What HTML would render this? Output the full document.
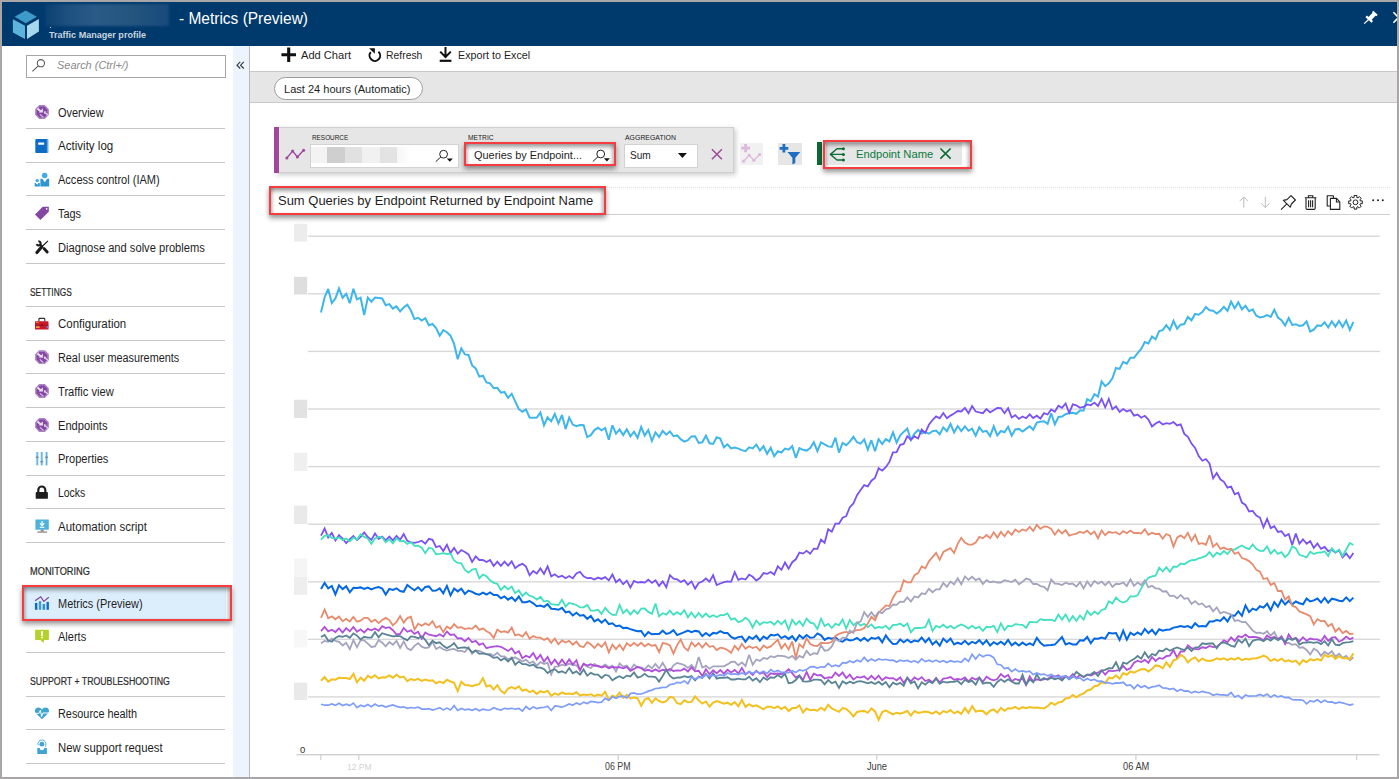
<!DOCTYPE html>
<html lang="en">
<head>
<meta charset="utf-8">
<title>Metrics (Preview)</title>
<style>
html,body{margin:0;padding:0;}
body{width:1399px;height:779px;overflow:hidden;background:#fff;font-family:"Liberation Sans",sans-serif;position:relative;}
.abs{position:absolute;}
.t{position:absolute;white-space:nowrap;line-height:1;transform:translateY(-50%);transform-origin:0 50%;}
#frame{position:absolute;left:0;top:0;width:1395px;height:775px;border-style:solid;border-color:#a8a6a6;border-width:2px;z-index:50;pointer-events:none;}
#hdr{left:2px;top:2px;width:1395px;height:44px;background:#003a6c;}
#blur{left:45px;top:4px;width:124px;height:22px;background:linear-gradient(90deg,#0a4073 0%,#1d507f 18%,#2a5a87 40%,#24557f 70%,#174a7b 100%);filter:blur(1.2px);}
#gutter{left:233px;top:46px;width:15.5px;height:731px;background:#edf4fd;}
#gline{left:248.5px;top:46px;width:1.6px;height:731px;background:#b9b9b9;}
.sep{position:absolute;left:26px;width:199px;height:1.3px;background:#c6c6c6;}
#search{left:26px;top:55px;width:197.5px;height:20.5px;border:1px solid #a6a6a6;background:#fff;box-sizing:content-box;}
#sel{left:24px;top:587px;width:201.5px;height:32.5px;background:#dceefb;}
.red{position:absolute;border:2.9px solid #f53c40;box-shadow:0 3px 5px rgba(0,0,0,.42),inset 0 4px 4px -1px rgba(0,0,0,.38),inset 3px 0 3px -1px rgba(0,0,0,.15),inset -4px 0 3px -1px rgba(0,0,0,.15);box-sizing:border-box;}
#graybar{left:250px;top:71px;width:1147px;height:32.4px;background:#e6e6e6;border-top:1px solid #c9c9c9;border-bottom:1px solid #c9c9c9;box-sizing:border-box;}
#pill{left:273.6px;top:76.5px;width:149px;height:23.4px;border:1px solid #9c9c9c;border-radius:12px;background:#fff;box-sizing:border-box;}
#mbar{left:273.6px;top:126.8px;width:460.2px;height:46px;background:#e6e6e6;border:1px solid #cfcfcf;box-sizing:border-box;box-shadow:2px 2px 5px rgba(0,0,0,.2);}
#mstrip{left:273.6px;top:127.2px;width:5.2px;height:45.6px;background:#a0479c;}
.inp{position:absolute;background:#fff;top:144.2px;height:23.6px;border:1px solid #d2d2d2;box-sizing:border-box;}
#dots{left:270px;top:187px;width:1120px;height:0;border-top:1px dotted #e2e2e2;}
#tline{left:270px;top:213.8px;width:1120px;height:1.3px;background:#cfcfcf;}
</style>
</head>
<body>
<div class="abs" id="hdr"></div>
<div class="abs" id="blur"></div>
<div class="abs" id="gutter"></div>
<div class="abs" id="gline"></div>
<div class="abs" id="search"></div>
<div class="abs" id="sel"></div>
<div class="sep" style="top:127.8px"></div>
<div class="sep" style="top:161.7px"></div>
<div class="sep" style="top:195px"></div>
<div class="sep" style="top:228.9px"></div>
<div class="sep" style="top:262.8px"></div>
<div class="sep" style="top:306px"></div>
<div class="sep" style="top:339.9px"></div>
<div class="sep" style="top:372.8px"></div>
<div class="sep" style="top:406.7px"></div>
<div class="sep" style="top:440.7px"></div>
<div class="sep" style="top:474.7px"></div>
<div class="sep" style="top:507.9px"></div>
<div class="sep" style="top:541.8px"></div>
<div class="sep" style="top:651.7px"></div>
<div class="sep" style="top:695.6px"></div>
<div class="sep" style="top:728.9px"></div>
<div class="sep" style="top:762.8px"></div>
<div class="red" style="left:22px;top:585.3px;width:210.1px;height:35.8px"></div>

<div class="abs" id="graybar"></div>
<div class="abs" id="pill"></div>
<div class="abs" id="mbar"></div>
<div class="abs" id="mstrip"></div>
<div class="inp" style="left:310px;width:149px"></div>
<div class="inp" style="left:464px;width:151px;top:143px;height:22.6px"></div>
<div class="inp" style="left:623.5px;width:74px"></div>
<div class="abs" style="left:311px;top:147px;width:100px;height:16.4px;filter:blur(0.6px);background:linear-gradient(90deg,#f3f3f3 0,#f3f3f3 16%,#cfcfcf 16%,#cfcfcf 33.5%,#e1e1e1 33.5%,#e1e1e1 51.5%,#f1f1f1 51.5%,#f1f1f1 69.5%,#e3e3e3 69.5%,#e3e3e3 86.5%,#f6f6f6 86.5%,#fff 100%)"></div>
<div class="red" style="left:463.7px;top:142.1px;width:152px;height:24px"></div>
<div class="abs" style="left:740.3px;top:143.2px;width:22.5px;height:22.3px;background:#f1f1f1"></div>
<div class="abs" style="left:778px;top:143.2px;width:24px;height:22.3px;background:#e6e6e6"></div>
<div class="abs" style="left:817px;top:142px;width:5.4px;height:22.6px;background:#0a6b35"></div>
<div class="abs" style="left:825.5px;top:143.2px;width:136px;height:21.4px;background:#e6e6e6"></div>
<div class="red" style="left:822.8px;top:140.3px;width:149.2px;height:29px"></div>
<div class="abs" id="dots"></div>
<div class="abs" id="tline"></div>
<div class="red" style="left:268.8px;top:186.4px;width:337px;height:28.2px;background:#fff"></div>
<svg class="abs" style="left:0;top:0" width="1399" height="779" viewBox="0 0 1399 779"><rect x="308" y="235.5" width="1072" height="1.4" fill="#d9d9d9"/><rect x="308" y="293.1" width="1072" height="1.4" fill="#d9d9d9"/><rect x="308" y="350.7" width="1072" height="1.4" fill="#d9d9d9"/><rect x="308" y="408.3" width="1072" height="1.4" fill="#d9d9d9"/><rect x="308" y="465.9" width="1072" height="1.4" fill="#d9d9d9"/><rect x="308" y="523.5" width="1072" height="1.4" fill="#d9d9d9"/><rect x="308" y="581.1" width="1072" height="1.4" fill="#d9d9d9"/><rect x="308" y="638.6" width="1072" height="1.4" fill="#d9d9d9"/><rect x="308" y="696.2" width="1072" height="1.4" fill="#d9d9d9"/><rect x="294" y="223.8" width="13.2" height="17.7" fill="#ececec"/><rect x="294" y="276.8" width="13.2" height="17.7" fill="#dedede"/><rect x="294" y="399.8" width="13.2" height="18.2" fill="#e2e2e2"/><rect x="294" y="452.8" width="13.2" height="18.2" fill="#efefef"/><rect x="294" y="505.6" width="13.2" height="18.4" fill="#e9e9e9"/><rect x="294" y="558.5" width="13.2" height="18.5" fill="#f5f5f5"/><rect x="294" y="577.0" width="13.2" height="17.8" fill="#eeeeee"/><rect x="294" y="630.0" width="13.2" height="17.4" fill="#f7f7f7"/><rect x="294" y="682.6" width="13.2" height="17.4" fill="#e9e9e9"/><rect x="296.5" y="754" width="1083" height="1.4" fill="#cfcfcf"/><rect x="320.2" y="755" width="1.2" height="5" fill="#cfcfcf"/><rect x="358.2" y="755" width="1.2" height="5" fill="#cfcfcf"/><rect x="617.6" y="755" width="1.2" height="5" fill="#cfcfcf"/><rect x="876.2" y="755" width="1.2" height="5" fill="#cfcfcf"/><rect x="1135.3" y="755" width="1.2" height="5" fill="#cfcfcf"/><rect x="1356.0" y="755" width="1.2" height="5" fill="#cfcfcf"/><polyline fill="none" stroke="#3eb6ea" stroke-width="2.0" stroke-linejoin="miter" stroke-miterlimit="3" points="321.0,312.4 324.6,297.2 328.2,289.0 331.8,303.0 335.4,298.4 339.0,288.3 342.6,297.8 346.2,293.9 349.8,303.2 353.4,288.7 357.0,299.3 360.6,297.7 364.2,315.0 367.8,297.6 371.4,301.7 375.0,297.5 378.6,297.9 382.2,298.5 385.7,305.2 389.3,304.1 392.9,308.6 396.5,306.4 400.1,311.5 403.7,307.5 407.3,304.8 410.9,310.5 414.5,319.1 418.1,317.8 421.7,320.5 425.3,318.2 428.9,325.3 432.5,324.0 436.1,328.0 439.7,335.7 443.3,330.2 446.9,332.2 450.5,335.7 454.1,343.9 457.7,359.3 461.3,348.3 464.9,354.4 468.5,354.9 472.1,365.4 475.7,368.4 479.3,376.6 482.9,375.7 486.5,382.5 490.1,383.4 493.7,388.3 497.3,387.8 500.9,392.7 504.5,391.9 508.1,397.8 511.7,393.7 515.2,401.3 518.8,409.2 522.4,411.7 526.0,409.5 529.6,417.6 533.2,417.8 536.8,417.5 540.4,412.6 544.0,425.3 547.6,417.3 551.2,421.3 554.8,414.0 558.4,423.3 562.0,415.0 565.6,429.1 569.2,417.6 572.8,424.6 576.4,426.2 580.0,425.1 583.6,425.3 587.2,437.1 590.8,435.2 594.4,430.1 598.0,427.8 601.6,430.4 605.2,428.0 608.8,439.8 612.4,425.3 616.0,433.6 619.6,429.4 623.2,435.1 626.8,429.3 630.4,436.3 634.0,431.7 637.6,437.8 641.2,427.0 644.7,435.6 648.3,430.0 651.9,441.0 655.5,432.4 659.1,437.0 662.7,430.9 666.3,434.7 669.9,431.5 673.5,436.2 677.1,435.4 680.7,439.2 684.3,441.6 687.9,440.2 691.5,436.4 695.1,436.3 698.7,443.0 702.3,442.3 705.9,435.8 709.5,443.3 713.1,443.9 716.7,437.3 720.3,438.6 723.9,447.3 727.5,444.3 731.1,448.4 734.7,447.6 738.3,448.6 741.9,450.1 745.5,451.2 749.1,447.4 752.7,448.4 756.3,444.6 759.9,450.6 763.5,446.2 767.1,453.8 770.7,447.8 774.2,456.2 777.8,451.3 781.4,452.5 785.0,448.6 788.6,449.7 792.2,446.2 795.8,457.8 799.4,448.1 803.0,449.8 806.6,450.6 810.2,448.1 813.8,442.3 817.4,451.2 821.0,442.4 824.6,444.3 828.2,446.4 831.8,446.9 835.4,437.7 839.0,452.6 842.6,442.9 846.2,445.2 849.8,441.7 853.4,436.8 857.0,442.2 860.6,443.6 864.2,439.4 867.8,449.7 871.4,440.2 875.0,451.3 878.6,439.1 882.2,444.0 885.8,439.1 889.4,441.4 893.0,432.4 896.6,442.6 900.2,435.3 903.7,431.9 907.3,428.5 910.9,440.0 914.5,433.7 918.1,429.9 921.7,433.4 925.3,432.2 928.9,433.7 932.5,431.2 936.1,430.5 939.7,434.3 943.3,427.4 946.9,431.2 950.5,423.9 954.1,432.4 957.7,426.0 961.3,431.0 964.9,426.3 968.5,430.8 972.1,428.7 975.7,435.7 979.3,427.3 982.9,431.8 986.5,430.9 990.1,436.1 993.7,426.3 997.3,435.4 1000.9,431.0 1004.5,432.3 1008.1,426.8 1011.7,435.5 1015.3,429.5 1018.9,428.9 1022.5,431.5 1026.1,428.9 1029.7,426.2 1033.2,429.7 1036.8,422.5 1040.4,421.7 1044.0,421.2 1047.6,423.8 1051.2,413.3 1054.8,424.3 1058.4,417.0 1062.0,416.6 1065.6,414.2 1069.2,413.0 1072.8,412.7 1076.4,413.8 1080.0,410.5 1083.6,410.4 1087.2,399.2 1090.8,401.2 1094.4,394.2 1098.0,396.6 1101.6,381.6 1105.2,386.2 1108.8,383.3 1112.4,378.3 1116.0,368.0 1119.6,368.9 1123.2,361.9 1126.8,363.7 1130.4,357.7 1134.0,357.8 1137.6,353.1 1141.2,349.0 1144.8,342.1 1148.4,343.4 1152.0,336.6 1155.6,339.3 1159.2,331.1 1162.7,330.2 1166.3,325.1 1169.9,329.9 1173.5,320.8 1177.1,328.7 1180.7,324.7 1184.3,324.0 1187.9,316.9 1191.5,320.3 1195.1,313.9 1198.7,314.7 1202.3,312.1 1205.9,306.9 1209.5,310.2 1213.1,310.7 1216.7,313.5 1220.3,310.9 1223.9,306.8 1227.5,310.9 1231.1,301.7 1234.7,308.3 1238.3,302.4 1241.9,309.3 1245.5,305.8 1249.1,311.3 1252.7,309.4 1256.3,315.7 1259.9,317.5 1263.5,316.7 1267.1,315.1 1270.7,316.9 1274.3,309.7 1277.9,317.5 1281.5,320.2 1285.1,325.4 1288.7,318.0 1292.2,324.9 1295.8,324.2 1299.4,326.0 1303.0,325.3 1306.6,321.4 1310.2,331.5 1313.8,329.7 1317.4,325.4 1321.0,325.9 1324.6,322.3 1328.2,327.5 1331.8,321.3 1335.4,326.6 1339.0,321.0 1342.6,327.0 1346.2,320.6 1349.8,329.9 1353.4,322.0"/><polyline fill="none" stroke="#7a52f4" stroke-width="1.8" stroke-linejoin="miter" stroke-miterlimit="3" points="321.0,535.6 324.6,528.5 328.2,537.4 331.8,532.9 335.4,540.4 339.0,535.2 342.6,538.5 346.2,543.2 349.8,539.1 353.4,536.1 357.0,540.1 360.6,536.9 364.2,532.5 367.8,537.0 371.4,539.9 375.0,533.5 378.6,538.8 382.2,536.7 385.7,540.3 389.3,536.6 392.9,540.3 396.5,535.8 400.1,539.8 403.7,534.0 407.3,540.9 410.9,542.4 414.5,542.9 418.1,542.0 421.7,540.7 425.3,543.6 428.9,538.8 432.5,539.8 436.1,547.2 439.7,546.0 443.3,551.0 446.9,544.7 450.5,553.1 454.1,547.8 457.7,553.6 461.3,550.0 464.9,551.9 468.5,554.4 472.1,561.9 475.7,556.4 479.3,560.0 482.9,559.9 486.5,562.0 490.1,560.0 493.7,566.0 497.3,561.7 500.9,565.8 504.5,561.7 508.1,565.6 511.7,561.4 515.2,568.1 518.8,565.3 522.4,563.8 526.0,566.6 529.6,575.3 533.2,571.0 536.8,573.6 540.4,568.4 544.0,574.0 547.6,566.4 551.2,576.4 554.8,574.3 558.4,577.1 562.0,575.8 565.6,578.3 569.2,576.1 572.8,578.4 576.4,573.5 580.0,571.8 583.6,576.3 587.2,578.2 590.8,577.9 594.4,579.5 598.0,577.6 601.6,578.9 605.2,577.1 608.8,580.4 612.4,574.5 616.0,582.2 619.6,579.2 623.2,584.2 626.8,580.7 630.4,587.5 634.0,580.9 637.6,582.6 641.2,582.0 644.7,582.6 648.3,579.7 651.9,582.9 655.5,580.2 659.1,585.9 662.7,581.4 666.3,587.2 669.9,575.1 673.5,578.6 677.1,579.3 680.7,582.0 684.3,580.2 687.9,584.7 691.5,581.4 695.1,588.6 698.7,582.9 702.3,581.5 705.9,578.5 709.5,581.7 713.1,575.2 716.7,585.1 720.3,583.5 723.9,582.2 727.5,581.4 731.1,581.8 734.7,572.1 738.3,579.9 741.9,578.4 745.5,579.5 749.1,574.6 752.7,576.8 756.3,580.6 759.9,578.1 763.5,573.1 767.1,573.8 770.7,572.0 774.2,574.5 777.8,566.3 781.4,569.8 785.0,562.5 788.6,568.6 792.2,562.2 795.8,559.3 799.4,552.6 803.0,553.6 806.6,550.8 810.2,553.7 813.8,548.6 817.4,548.8 821.0,539.6 824.6,542.8 828.2,529.3 831.8,531.7 835.4,523.7 839.0,523.7 842.6,517.8 846.2,516.2 849.8,507.2 853.4,503.5 857.0,495.2 860.6,490.0 864.2,485.1 867.8,486.4 871.4,480.7 875.0,478.0 878.6,468.2 882.2,470.7 885.8,467.2 889.4,461.9 893.0,452.4 896.6,452.1 900.2,444.8 903.7,443.9 907.3,436.2 910.9,439.7 914.5,436.4 918.1,438.5 921.7,429.6 925.3,432.8 928.9,424.8 932.5,420.0 936.1,416.4 939.7,418.3 943.3,413.0 946.9,418.3 950.5,415.6 954.1,413.5 957.7,411.0 961.3,411.5 964.9,407.9 968.5,413.2 972.1,406.1 975.7,411.5 979.3,412.4 982.9,413.2 986.5,409.1 990.1,412.3 993.7,410.2 997.3,408.0 1000.9,408.1 1004.5,413.2 1008.1,408.2 1011.7,417.5 1015.3,415.2 1018.9,418.9 1022.5,416.5 1026.1,418.2 1029.7,414.3 1033.2,418.0 1036.8,415.7 1040.4,418.6 1044.0,413.2 1047.6,414.5 1051.2,409.4 1054.8,411.7 1058.4,405.8 1062.0,407.8 1065.6,403.5 1069.2,412.9 1072.8,404.3 1076.4,405.3 1080.0,407.7 1083.6,407.0 1087.2,404.4 1090.8,405.3 1094.4,402.6 1098.0,406.0 1101.6,398.9 1105.2,407.3 1108.8,399.0 1112.4,409.3 1116.0,406.4 1119.6,411.9 1123.2,409.0 1126.8,411.4 1130.4,410.0 1134.0,415.6 1137.6,414.6 1141.2,417.7 1144.8,415.8 1148.4,419.6 1152.0,426.5 1155.6,423.5 1159.2,421.6 1162.7,424.5 1166.3,423.1 1169.9,423.9 1173.5,422.0 1177.1,425.4 1180.7,424.4 1184.3,433.9 1187.9,436.8 1191.5,443.6 1195.1,447.9 1198.7,456.0 1202.3,460.7 1205.9,459.0 1209.5,463.5 1213.1,478.4 1216.7,473.0 1220.3,479.3 1223.9,481.8 1227.5,487.6 1231.1,486.5 1234.7,494.2 1238.3,492.6 1241.9,502.6 1245.5,505.0 1249.1,511.5 1252.7,510.9 1256.3,515.5 1259.9,517.5 1263.5,527.3 1267.1,518.8 1270.7,528.1 1274.3,526.1 1277.9,532.0 1281.5,531.3 1285.1,536.1 1288.7,534.0 1292.2,545.1 1295.8,533.5 1299.4,543.6 1303.0,539.3 1306.6,543.7 1310.2,541.0 1313.8,547.9 1317.4,543.5 1321.0,548.9 1324.6,546.9 1328.2,551.2 1331.8,549.7 1335.4,552.7 1339.0,550.2 1342.6,557.4 1346.2,553.4 1349.8,558.2 1353.4,552.9"/><polyline fill="none" stroke="#40e0c0" stroke-width="1.8" stroke-linejoin="miter" stroke-miterlimit="3" points="321.0,539.6 324.6,535.9 328.2,535.2 331.8,537.8 335.4,538.5 339.0,537.4 342.6,539.9 346.2,538.6 349.8,541.2 353.4,537.5 357.0,539.5 360.6,534.3 364.2,536.9 367.8,538.4 371.4,543.9 375.0,538.5 378.6,536.7 382.2,537.5 385.7,542.3 389.3,539.3 392.9,543.3 396.5,538.2 400.1,541.3 403.7,540.8 407.3,544.0 410.9,542.1 414.5,545.9 418.1,545.6 421.7,547.7 425.3,553.2 428.9,547.7 432.5,548.7 436.1,554.2 439.7,553.9 443.3,553.2 446.9,554.0 450.5,553.7 454.1,560.5 457.7,563.0 461.3,563.4 464.9,569.9 468.5,572.7 472.1,569.5 475.7,568.7 479.3,578.3 482.9,574.6 486.5,576.3 490.1,580.3 493.7,582.8 497.3,583.8 500.9,590.0 504.5,586.1 508.1,589.3 511.7,586.5 515.2,593.1 518.8,590.4 522.4,596.0 526.0,592.5 529.6,595.8 533.2,596.8 536.8,599.6 540.4,596.7 544.0,601.6 547.6,600.7 551.2,604.2 554.8,604.6 558.4,605.0 562.0,599.7 565.6,606.5 569.2,602.9 572.8,603.9 576.4,605.0 580.0,607.4 583.6,607.3 587.2,604.9 590.8,610.5 594.4,610.6 598.0,609.7 601.6,613.9 605.2,607.9 608.8,612.2 612.4,614.9 616.0,614.9 619.6,605.0 623.2,613.1 626.8,609.6 630.4,614.6 634.0,610.1 637.6,613.8 641.2,608.6 644.7,608.5 648.3,611.9 651.9,613.8 655.5,603.6 659.1,616.4 662.7,613.2 666.3,614.6 669.9,610.6 673.5,614.8 677.1,612.2 680.7,614.6 684.3,610.2 687.9,617.3 691.5,612.6 695.1,617.5 698.7,612.9 702.3,617.1 705.9,613.5 709.5,617.1 713.1,615.3 716.7,617.0 720.3,615.1 723.9,615.1 727.5,613.4 731.1,619.7 734.7,618.3 738.3,622.1 741.9,620.9 745.5,617.6 749.1,620.5 752.7,627.5 756.3,620.5 759.9,624.8 763.5,622.2 767.1,622.8 770.7,621.7 774.2,624.7 777.8,620.7 781.4,624.3 785.0,620.5 788.6,629.5 792.2,619.9 795.8,624.6 799.4,621.2 803.0,625.9 806.6,618.7 810.2,622.7 813.8,623.5 817.4,629.0 821.0,618.8 824.6,626.0 828.2,623.9 831.8,628.0 835.4,623.9 839.0,625.1 842.6,619.5 846.2,628.6 849.8,620.0 853.4,625.1 857.0,622.4 860.6,625.5 864.2,623.9 867.8,627.1 871.4,624.4 875.0,628.4 878.6,627.0 882.2,627.7 885.8,625.8 889.4,629.3 893.0,624.9 896.6,624.8 900.2,623.6 903.7,626.4 907.3,623.4 910.9,632.4 914.5,628.2 918.1,628.0 921.7,627.8 925.3,627.1 928.9,619.7 932.5,631.1 936.1,625.9 939.7,627.5 943.3,624.6 946.9,627.8 950.5,625.9 954.1,628.5 957.7,626.1 961.3,624.4 964.9,626.0 968.5,628.6 972.1,625.8 975.7,628.4 979.3,626.8 982.9,630.8 986.5,626.8 990.1,627.4 993.7,625.9 997.3,631.9 1000.9,623.3 1004.5,630.2 1008.1,625.8 1011.7,626.4 1015.3,624.1 1018.9,624.6 1022.5,624.9 1026.1,627.8 1029.7,622.0 1033.2,622.2 1036.8,622.4 1040.4,619.2 1044.0,620.0 1047.6,619.9 1051.2,619.6 1054.8,621.2 1058.4,614.6 1062.0,619.6 1065.6,614.5 1069.2,621.3 1072.8,616.0 1076.4,621.0 1080.0,615.5 1083.6,619.5 1087.2,610.9 1090.8,615.1 1094.4,611.6 1098.0,614.1 1101.6,610.0 1105.2,608.9 1108.8,601.3 1112.4,603.6 1116.0,597.5 1119.6,601.1 1123.2,602.6 1126.8,601.1 1130.4,596.2 1134.0,596.7 1137.6,595.3 1141.2,588.4 1144.8,582.3 1148.4,577.8 1152.0,576.4 1155.6,575.7 1159.2,567.7 1162.7,571.5 1166.3,567.2 1169.9,571.8 1173.5,566.5 1177.1,566.8 1180.7,563.5 1184.3,564.3 1187.9,561.9 1191.5,560.1 1195.1,560.0 1198.7,558.3 1202.3,557.3 1205.9,555.9 1209.5,552.1 1213.1,556.9 1216.7,552.6 1220.3,554.6 1223.9,551.0 1227.5,554.0 1231.1,549.7 1234.7,549.6 1238.3,547.3 1241.9,545.5 1245.5,547.7 1249.1,549.2 1252.7,544.4 1256.3,548.8 1259.9,550.9 1263.5,550.9 1267.1,546.5 1270.7,553.6 1274.3,549.9 1277.9,553.8 1281.5,552.2 1285.1,557.1 1288.7,553.6 1292.2,546.3 1295.8,548.4 1299.4,554.8 1303.0,556.0 1306.6,557.4 1310.2,551.7 1313.8,554.1 1317.4,552.6 1321.0,552.5 1324.6,551.3 1328.2,556.0 1331.8,548.4 1335.4,552.2 1339.0,549.7 1342.6,556.0 1346.2,549.5 1349.8,543.0 1353.4,545.0"/><polyline fill="none" stroke="#0468e6" stroke-width="2.0" stroke-linejoin="miter" stroke-miterlimit="3" points="321.0,588.9 324.6,582.9 328.2,588.3 331.8,586.0 335.4,594.3 339.0,585.4 342.6,589.1 346.2,586.2 349.8,592.3 353.4,587.8 357.0,588.1 360.6,587.4 364.2,589.0 367.8,587.5 371.4,589.4 375.0,587.9 378.6,587.0 382.2,588.6 385.7,594.5 389.3,588.9 392.9,589.9 396.5,588.3 400.1,591.0 403.7,591.8 407.3,585.0 410.9,587.8 414.5,590.3 418.1,587.3 421.7,590.9 425.3,586.9 428.9,586.4 432.5,590.8 436.1,590.5 439.7,588.4 443.3,593.3 446.9,585.9 450.5,595.4 454.1,588.5 457.7,591.4 461.3,588.6 464.9,593.9 468.5,590.6 472.1,591.8 475.7,593.7 479.3,594.7 482.9,592.6 486.5,594.5 490.1,592.4 493.7,595.1 497.3,595.1 500.9,598.2 504.5,596.4 508.1,599.7 511.7,597.4 515.2,600.9 518.8,596.5 522.4,602.3 526.0,602.2 529.6,601.0 533.2,603.3 536.8,606.2 540.4,605.6 544.0,606.9 547.6,604.2 551.2,608.7 554.8,609.1 558.4,609.8 562.0,607.8 565.6,612.3 569.2,611.5 572.8,615.5 576.4,612.7 580.0,615.7 583.6,615.0 587.2,618.8 590.8,616.0 594.4,621.4 598.0,619.3 601.6,622.6 605.2,619.6 608.8,624.1 612.4,623.3 616.0,626.2 619.6,625.5 623.2,628.1 626.8,627.7 630.4,629.1 634.0,630.2 637.6,631.2 641.2,631.0 644.7,636.2 648.3,632.1 651.9,634.3 655.5,634.0 659.1,634.1 662.7,630.7 666.3,634.0 669.9,632.9 673.5,630.1 677.1,635.1 680.7,633.6 684.3,632.2 687.9,630.5 691.5,632.1 695.1,630.9 698.7,631.5 702.3,636.1 705.9,633.0 709.5,635.8 713.1,632.9 716.7,633.4 720.3,631.2 723.9,632.9 727.5,633.1 731.1,636.9 734.7,638.7 738.3,637.1 741.9,636.6 745.5,641.8 749.1,636.9 752.7,638.8 756.3,635.8 759.9,640.6 763.5,636.6 767.1,638.7 770.7,634.8 774.2,635.5 777.8,634.3 781.4,638.1 785.0,636.2 788.6,638.9 792.2,636.1 795.8,640.8 799.4,635.3 803.0,638.3 806.6,635.0 810.2,637.8 813.8,637.4 817.4,633.4 821.0,635.4 824.6,639.9 828.2,637.8 831.8,638.7 835.4,637.4 839.0,640.6 842.6,641.7 846.2,639.0 849.8,640.4 853.4,639.9 857.0,638.0 860.6,640.7 864.2,637.9 867.8,640.9 871.4,637.8 875.0,638.8 878.6,637.3 882.2,642.4 885.8,635.3 889.4,640.3 893.0,644.1 896.6,643.9 900.2,639.5 903.7,642.3 907.3,639.8 910.9,642.4 914.5,640.6 918.1,641.4 921.7,637.5 925.3,642.1 928.9,638.2 932.5,644.4 936.1,641.2 939.7,645.6 943.3,638.6 946.9,642.2 950.5,638.5 954.1,644.4 957.7,642.7 961.3,644.1 964.9,640.8 968.5,644.4 972.1,641.8 975.7,643.3 979.3,640.2 982.9,644.2 986.5,640.4 990.1,645.5 993.7,642.2 997.3,644.4 1000.9,641.7 1004.5,644.5 1008.1,640.0 1011.7,645.3 1015.3,642.6 1018.9,645.5 1022.5,642.6 1026.1,645.1 1029.7,643.3 1033.2,645.2 1036.8,638.0 1040.4,642.7 1044.0,645.8 1047.6,645.3 1051.2,645.0 1054.8,644.6 1058.4,640.9 1062.0,637.1 1065.6,644.5 1069.2,643.1 1072.8,644.5 1076.4,644.5 1080.0,640.2 1083.6,640.6 1087.2,637.0 1090.8,643.2 1094.4,638.5 1098.0,638.8 1101.6,637.6 1105.2,638.6 1108.8,632.8 1112.4,633.6 1116.0,633.0 1119.6,639.9 1123.2,630.7 1126.8,639.7 1130.4,632.7 1134.0,635.1 1137.6,632.5 1141.2,634.7 1144.8,628.9 1148.4,633.1 1152.0,629.8 1155.6,634.4 1159.2,629.2 1162.7,630.6 1166.3,629.7 1169.9,629.4 1173.5,627.6 1177.1,627.0 1180.7,626.0 1184.3,626.9 1187.9,626.1 1191.5,627.9 1195.1,623.3 1198.7,626.4 1202.3,625.9 1205.9,626.4 1209.5,621.6 1213.1,621.5 1216.7,620.1 1220.3,621.0 1223.9,617.2 1227.5,621.5 1231.1,615.4 1234.7,615.8 1238.3,611.4 1241.9,615.8 1245.5,605.4 1249.1,612.2 1252.7,608.6 1256.3,610.1 1259.9,606.2 1263.5,607.6 1267.1,603.7 1270.7,610.2 1274.3,602.2 1277.9,606.6 1281.5,599.7 1285.1,604.5 1288.7,600.7 1292.2,604.4 1295.8,601.5 1299.4,603.2 1303.0,604.3 1306.6,598.6 1310.2,601.5 1313.8,600.4 1317.4,598.6 1321.0,602.5 1324.6,597.8 1328.2,602.6 1331.8,598.7 1335.4,599.5 1339.0,600.7 1342.6,601.1 1346.2,597.4 1349.8,601.1 1353.4,597.6"/><polyline fill="none" stroke="#e88b6c" stroke-width="1.8" stroke-linejoin="miter" stroke-miterlimit="3" points="321.0,617.8 324.6,609.5 328.2,618.2 331.8,616.4 335.4,619.3 339.0,616.5 342.6,621.2 346.2,618.8 349.8,621.4 353.4,616.9 357.0,621.8 360.6,620.6 364.2,617.9 367.8,617.9 371.4,621.9 375.0,619.7 378.6,623.1 382.2,620.1 385.7,617.9 389.3,620.1 392.9,625.3 396.5,621.9 400.1,616.0 403.7,622.6 407.3,618.1 410.9,616.8 414.5,629.6 418.1,623.7 421.7,625.8 425.3,623.4 428.9,625.2 432.5,621.2 436.1,627.7 439.7,626.0 443.3,632.1 446.9,626.5 450.5,628.8 454.1,624.2 457.7,627.7 461.3,627.2 464.9,629.1 468.5,628.2 472.1,628.9 475.7,625.5 479.3,629.9 482.9,628.4 486.5,631.2 490.1,633.1 493.7,637.9 497.3,629.6 500.9,632.1 504.5,631.3 508.1,632.6 511.7,627.5 515.2,635.4 518.8,634.5 522.4,636.6 526.0,632.1 529.6,638.7 533.2,636.0 536.8,637.6 540.4,637.6 544.0,639.9 547.6,638.1 551.2,642.8 554.8,638.5 558.4,644.3 562.0,640.5 565.6,642.5 569.2,640.8 572.8,644.7 576.4,641.6 580.0,646.1 583.6,647.0 587.2,642.2 590.8,644.3 594.4,648.0 598.0,643.8 601.6,647.0 605.2,642.3 608.8,652.4 612.4,644.7 616.0,649.0 619.6,644.7 623.2,649.9 626.8,643.1 630.4,646.0 634.0,642.9 637.6,645.8 641.2,642.8 644.7,646.4 648.3,643.9 651.9,645.7 655.5,645.1 659.1,652.0 662.7,643.0 666.3,643.7 669.9,645.4 673.5,653.7 677.1,645.1 680.7,639.6 684.3,647.4 687.9,650.6 691.5,642.3 695.1,646.4 698.7,643.0 702.3,647.5 705.9,642.9 709.5,646.8 713.1,645.9 716.7,650.0 720.3,647.7 723.9,648.4 727.5,650.0 731.1,652.8 734.7,645.9 738.3,649.9 741.9,643.8 745.5,648.8 749.1,646.3 752.7,648.0 756.3,646.7 759.9,650.6 763.5,645.4 767.1,647.9 770.7,646.4 774.2,643.1 777.8,639.8 781.4,648.4 785.0,643.8 788.6,649.4 792.2,641.5 795.8,658.0 799.4,644.1 803.0,647.6 806.6,638.2 810.2,644.0 813.8,645.6 817.4,646.0 821.0,642.8 824.6,643.2 828.2,643.1 831.8,641.8 835.4,636.0 839.0,633.9 842.6,632.6 846.2,632.0 849.8,633.0 853.4,631.2 857.0,630.2 860.6,629.9 864.2,628.0 867.8,623.6 871.4,616.8 875.0,620.2 878.6,612.7 882.2,609.2 885.8,605.4 889.4,606.1 893.0,597.7 896.6,591.7 900.2,591.1 903.7,580.4 907.3,582.4 910.9,582.3 914.5,575.1 918.1,573.1 921.7,566.4 925.3,568.3 928.9,561.3 932.5,557.2 936.1,552.9 939.7,559.8 943.3,552.0 946.9,549.9 950.5,548.2 954.1,553.0 957.7,543.9 961.3,537.8 964.9,542.5 968.5,544.6 972.1,544.6 975.7,542.5 979.3,536.9 982.9,538.3 986.5,535.0 990.1,538.1 993.7,532.3 997.3,537.6 1000.9,531.9 1004.5,536.3 1008.1,531.1 1011.7,534.8 1015.3,529.5 1018.9,532.0 1022.5,529.4 1026.1,530.8 1029.7,526.8 1033.2,530.9 1036.8,524.7 1040.4,528.9 1044.0,526.4 1047.6,526.8 1051.2,528.9 1054.8,534.7 1058.4,529.8 1062.0,533.5 1065.6,530.2 1069.2,535.6 1072.8,534.5 1076.4,533.6 1080.0,531.7 1083.6,533.0 1087.2,530.7 1090.8,534.3 1094.4,531.6 1098.0,538.2 1101.6,530.5 1105.2,535.2 1108.8,531.8 1112.4,532.9 1116.0,532.2 1119.6,534.4 1123.2,531.2 1126.8,533.2 1130.4,530.6 1134.0,533.1 1137.6,532.8 1141.2,533.5 1144.8,529.3 1148.4,534.8 1152.0,532.8 1155.6,534.2 1159.2,533.8 1162.7,538.7 1166.3,534.0 1169.9,535.7 1173.5,546.6 1177.1,537.7 1180.7,535.4 1184.3,538.3 1187.9,532.8 1191.5,540.9 1195.1,534.9 1198.7,544.0 1202.3,543.2 1205.9,544.7 1209.5,535.2 1213.1,546.8 1216.7,543.3 1220.3,548.9 1223.9,547.6 1227.5,549.6 1231.1,548.7 1234.7,553.9 1238.3,552.3 1241.9,558.1 1245.5,559.1 1249.1,561.1 1252.7,564.3 1256.3,569.9 1259.9,571.7 1263.5,579.0 1267.1,578.0 1270.7,584.9 1274.3,582.9 1277.9,591.0 1281.5,591.0 1285.1,599.8 1288.7,596.4 1292.2,605.8 1295.8,607.1 1299.4,611.5 1303.0,612.9 1306.6,614.4 1310.2,616.2 1313.8,624.4 1317.4,619.1 1321.0,621.2 1324.6,621.0 1328.2,626.3 1331.8,623.8 1335.4,631.7 1339.0,628.1 1342.6,633.0 1346.2,630.9 1349.8,634.0 1353.4,633.6"/><polyline fill="none" stroke="#a4a4bf" stroke-width="1.8" stroke-linejoin="miter" stroke-miterlimit="3" points="321.0,643.3 324.6,640.9 328.2,641.7 331.8,638.7 335.4,640.8 339.0,641.9 342.6,645.5 346.2,642.8 349.8,649.2 353.4,640.0 357.0,647.3 360.6,640.2 364.2,640.3 367.8,643.7 371.4,647.0 375.0,646.4 378.6,640.1 382.2,642.7 385.7,646.3 389.3,642.1 392.9,644.8 396.5,640.8 400.1,648.0 403.7,641.4 407.3,648.3 410.9,650.1 414.5,645.8 418.1,643.2 421.7,646.6 425.3,648.0 428.9,647.5 432.5,641.7 436.1,649.1 439.7,647.0 443.3,649.3 446.9,650.5 450.5,649.3 454.1,648.9 457.7,650.8 461.3,650.8 464.9,652.0 468.5,647.1 472.1,653.9 475.7,650.5 479.3,650.9 482.9,652.5 486.5,654.3 490.1,654.0 493.7,655.7 497.3,652.7 500.9,656.3 504.5,656.5 508.1,659.5 511.7,657.8 515.2,657.5 518.8,659.4 522.4,661.5 526.0,659.6 529.6,663.1 533.2,661.5 536.8,665.6 540.4,662.0 544.0,664.0 547.6,662.7 551.2,674.4 554.8,666.6 558.4,666.4 562.0,664.6 565.6,665.6 569.2,663.6 572.8,665.0 576.4,665.3 580.0,670.1 583.6,664.1 587.2,666.8 590.8,668.0 594.4,664.0 598.0,666.5 601.6,666.8 605.2,664.6 608.8,667.0 612.4,665.6 616.0,671.6 619.6,663.4 623.2,666.6 626.8,665.6 630.4,669.9 634.0,664.5 637.6,667.7 641.2,667.5 644.7,669.4 648.3,665.4 651.9,668.3 655.5,664.0 659.1,668.6 662.7,662.8 666.3,669.3 669.9,670.8 673.5,665.3 677.1,663.0 680.7,663.9 684.3,665.0 687.9,667.9 691.5,665.1 695.1,669.2 698.7,657.0 702.3,667.6 705.9,665.9 709.5,668.7 713.1,666.3 716.7,666.4 720.3,666.3 723.9,666.4 727.5,664.4 731.1,661.9 734.7,661.6 738.3,665.3 741.9,662.4 745.5,666.0 749.1,654.8 752.7,664.7 756.3,659.5 759.9,660.9 763.5,658.0 767.1,658.9 770.7,656.2 774.2,657.3 777.8,655.6 781.4,655.9 785.0,656.3 788.6,658.0 792.2,655.9 795.8,659.7 799.4,655.9 803.0,657.5 806.6,650.9 810.2,655.2 813.8,653.1 817.4,653.9 821.0,645.1 824.6,650.7 828.2,650.1 831.8,646.5 835.4,639.2 839.0,641.1 842.6,637.6 846.2,637.8 849.8,630.6 853.4,632.9 857.0,622.8 860.6,621.6 864.2,612.2 867.8,617.0 871.4,612.2 875.0,617.0 878.6,611.8 882.2,613.2 885.8,609.3 889.4,608.5 893.0,604.5 896.6,604.8 900.2,601.6 903.7,601.9 907.3,597.4 910.9,601.5 914.5,596.5 918.1,597.4 921.7,593.3 925.3,594.1 928.9,588.8 932.5,592.2 936.1,589.3 939.7,589.3 943.3,582.8 946.9,586.8 950.5,581.5 954.1,584.4 957.7,578.3 961.3,584.3 964.9,576.4 968.5,579.8 972.1,576.8 975.7,580.1 979.3,578.5 982.9,584.0 986.5,580.1 990.1,582.2 993.7,581.5 997.3,582.5 1000.9,582.5 1004.5,580.2 1008.1,581.0 1011.7,582.1 1015.3,579.8 1018.9,584.3 1022.5,581.7 1026.1,578.6 1029.7,579.6 1033.2,584.0 1036.8,583.8 1040.4,586.1 1044.0,586.8 1047.6,590.3 1051.2,579.6 1054.8,583.7 1058.4,583.8 1062.0,585.1 1065.6,582.7 1069.2,584.0 1072.8,583.7 1076.4,586.5 1080.0,582.1 1083.6,588.4 1087.2,581.5 1090.8,586.3 1094.4,581.1 1098.0,583.7 1101.6,581.7 1105.2,585.2 1108.8,581.6 1112.4,587.0 1116.0,583.8 1119.6,584.1 1123.2,582.5 1126.8,586.0 1130.4,579.4 1134.0,585.8 1137.6,582.6 1141.2,585.1 1144.8,580.4 1148.4,587.4 1152.0,585.7 1155.6,588.3 1159.2,588.7 1162.7,591.5 1166.3,591.3 1169.9,596.1 1173.5,595.6 1177.1,598.3 1180.7,594.9 1184.3,598.7 1187.9,598.2 1191.5,604.0 1195.1,601.1 1198.7,604.6 1202.3,603.5 1205.9,607.3 1209.5,605.9 1213.1,611.3 1216.7,607.4 1220.3,613.3 1223.9,611.9 1227.5,613.2 1231.1,614.4 1234.7,620.9 1238.3,620.2 1241.9,622.2 1245.5,622.0 1249.1,626.1 1252.7,630.6 1256.3,633.0 1259.9,632.6 1263.5,633.8 1267.1,631.3 1270.7,635.7 1274.3,632.1 1277.9,639.3 1281.5,636.3 1285.1,642.8 1288.7,643.0 1292.2,644.7 1295.8,644.1 1299.4,647.7 1303.0,647.3 1306.6,650.0 1310.2,654.5 1313.8,648.7 1317.4,650.7 1321.0,655.8 1324.6,651.8 1328.2,654.3 1331.8,651.2 1335.4,656.6 1339.0,653.7 1342.6,657.9 1346.2,655.9 1349.8,660.3 1353.4,657.2"/><polyline fill="none" stroke="#b04fdb" stroke-width="1.8" stroke-linejoin="miter" stroke-miterlimit="3" points="321.0,631.1 324.6,627.0 328.2,631.4 331.8,629.7 335.4,632.0 339.0,628.4 342.6,632.5 346.2,628.1 349.8,631.3 353.4,627.0 357.0,631.7 360.6,629.3 364.2,632.4 367.8,628.8 371.4,630.3 375.0,628.5 378.6,630.8 382.2,626.1 385.7,628.1 389.3,627.2 392.9,630.2 396.5,634.5 400.1,633.9 403.7,628.0 407.3,631.8 410.9,630.4 414.5,633.8 418.1,631.7 421.7,638.7 425.3,632.5 428.9,634.7 432.5,635.3 436.1,636.2 439.7,634.3 443.3,636.5 446.9,631.5 450.5,635.0 454.1,634.4 457.7,638.5 461.3,638.2 464.9,641.2 468.5,638.0 472.1,642.3 475.7,640.9 479.3,644.9 482.9,643.3 486.5,648.2 490.1,647.1 493.7,646.6 497.3,646.2 500.9,646.8 504.5,648.8 508.1,651.0 511.7,648.3 515.2,653.4 518.8,651.1 522.4,658.2 526.0,655.7 529.6,657.4 533.2,653.1 536.8,659.3 540.4,654.9 544.0,661.6 547.6,657.0 551.2,664.4 554.8,659.6 558.4,664.6 562.0,659.6 565.6,664.5 569.2,659.4 572.8,664.5 576.4,660.2 580.0,670.3 583.6,663.6 587.2,665.5 590.8,664.3 594.4,665.8 598.0,665.6 601.6,667.5 605.2,666.2 608.8,668.3 612.4,667.0 616.0,667.5 619.6,667.1 623.2,668.3 626.8,667.0 630.4,670.9 634.0,668.9 637.6,666.7 641.2,668.3 644.7,670.7 648.3,669.8 651.9,671.4 655.5,669.4 659.1,671.5 662.7,669.8 666.3,670.5 669.9,669.1 673.5,671.0 677.1,670.4 680.7,670.7 684.3,668.6 687.9,671.4 691.5,667.3 695.1,671.3 698.7,670.8 702.3,676.1 705.9,669.3 709.5,674.3 713.1,670.2 716.7,673.3 720.3,670.0 723.9,673.7 727.5,669.8 731.1,672.5 734.7,669.9 738.3,673.4 741.9,667.9 745.5,674.5 749.1,671.7 752.7,675.0 756.3,670.7 759.9,673.8 763.5,672.4 767.1,677.2 770.7,673.3 774.2,674.2 777.8,673.5 781.4,674.2 785.0,672.5 788.6,669.3 792.2,673.1 795.8,677.5 799.4,675.4 803.0,679.9 806.6,672.0 810.2,679.7 813.8,673.6 817.4,675.3 821.0,675.0 824.6,678.5 828.2,677.3 831.8,677.5 835.4,672.5 839.0,675.9 842.6,672.5 846.2,678.1 849.8,674.6 853.4,679.6 857.0,676.9 860.6,677.6 864.2,676.3 867.8,679.6 871.4,675.8 875.0,679.5 878.6,675.6 882.2,680.2 885.8,677.3 889.4,678.4 893.0,678.1 896.6,680.3 900.2,677.4 903.7,682.8 907.3,677.8 910.9,681.4 914.5,677.4 918.1,679.7 921.7,677.1 925.3,681.0 928.9,679.7 932.5,682.3 936.1,678.0 939.7,682.5 943.3,678.6 946.9,678.2 950.5,677.1 954.1,679.7 957.7,679.0 961.3,679.6 964.9,677.4 968.5,681.4 972.1,677.9 975.7,679.5 979.3,677.7 982.9,681.8 986.5,676.8 990.1,679.1 993.7,680.4 997.3,679.1 1000.9,674.0 1004.5,677.1 1008.1,675.0 1011.7,681.3 1015.3,679.0 1018.9,680.2 1022.5,678.5 1026.1,684.9 1029.7,676.3 1033.2,681.4 1036.8,679.3 1040.4,680.1 1044.0,679.4 1047.6,679.0 1051.2,676.4 1054.8,676.5 1058.4,675.2 1062.0,678.9 1065.6,675.8 1069.2,678.0 1072.8,674.0 1076.4,678.2 1080.0,674.9 1083.6,677.2 1087.2,674.7 1090.8,675.6 1094.4,673.7 1098.0,672.7 1101.6,670.2 1105.2,674.7 1108.8,670.7 1112.4,671.1 1116.0,670.7 1119.6,670.2 1123.2,665.9 1126.8,669.8 1130.4,668.2 1134.0,662.7 1137.6,660.7 1141.2,662.1 1144.8,659.9 1148.4,662.8 1152.0,657.0 1155.6,660.9 1159.2,657.9 1162.7,658.8 1166.3,656.2 1169.9,655.6 1173.5,650.1 1177.1,657.7 1180.7,651.5 1184.3,651.4 1187.9,645.4 1191.5,648.1 1195.1,648.9 1198.7,649.4 1202.3,647.3 1205.9,648.0 1209.5,646.0 1213.1,647.1 1216.7,646.6 1220.3,643.8 1223.9,640.3 1227.5,642.1 1231.1,637.4 1234.7,641.0 1238.3,636.1 1241.9,637.3 1245.5,634.6 1249.1,637.2 1252.7,636.8 1256.3,637.1 1259.9,638.1 1263.5,640.4 1267.1,635.5 1270.7,638.2 1274.3,636.9 1277.9,639.3 1281.5,636.7 1285.1,644.0 1288.7,634.5 1292.2,639.4 1295.8,637.8 1299.4,641.4 1303.0,637.2 1306.6,640.8 1310.2,638.5 1313.8,639.3 1317.4,639.4 1321.0,641.4 1324.6,635.9 1328.2,640.9 1331.8,637.5 1335.4,637.2 1339.0,641.7 1342.6,640.0 1346.2,636.6 1349.8,639.2 1353.4,637.6"/><polyline fill="none" stroke="#5a8496" stroke-width="1.8" stroke-linejoin="miter" stroke-miterlimit="3" points="321.0,637.0 324.6,634.9 328.2,640.6 331.8,641.7 335.4,637.9 339.0,636.0 342.6,636.8 346.2,635.4 349.8,637.8 353.4,633.4 357.0,635.6 360.6,639.4 364.2,636.8 367.8,637.6 371.4,637.6 375.0,632.2 378.6,637.2 382.2,633.2 385.7,634.3 389.3,635.3 392.9,636.4 396.5,636.0 400.1,636.1 403.7,638.4 407.3,640.3 410.9,636.4 414.5,636.9 418.1,638.2 421.7,636.4 425.3,639.9 428.9,645.3 432.5,640.8 436.1,643.2 439.7,642.3 443.3,645.8 446.9,648.1 450.5,646.1 454.1,643.0 457.7,648.3 461.3,647.6 464.9,647.4 468.5,648.3 472.1,652.4 475.7,650.5 479.3,653.9 482.9,653.4 486.5,654.0 490.1,655.5 493.7,657.9 497.3,657.2 500.9,660.4 504.5,658.3 508.1,661.4 511.7,657.8 515.2,664.7 518.8,661.6 522.4,664.2 526.0,664.1 529.6,665.8 533.2,664.6 536.8,667.5 540.4,667.7 544.0,669.1 547.6,673.1 551.2,670.6 554.8,669.2 558.4,672.4 562.0,671.3 565.6,673.2 569.2,668.0 572.8,673.3 576.4,671.4 580.0,674.6 583.6,669.5 587.2,675.6 590.8,672.9 594.4,674.6 598.0,674.6 601.6,678.0 605.2,674.9 608.8,675.7 612.4,680.2 616.0,677.9 619.6,676.2 623.2,678.2 626.8,675.6 630.4,676.4 634.0,672.5 637.6,677.6 641.2,676.5 644.7,673.8 648.3,676.6 651.9,676.7 655.5,677.0 659.1,681.6 662.7,676.0 666.3,669.8 669.9,676.0 673.5,678.6 677.1,677.6 680.7,677.5 684.3,676.2 687.9,677.4 691.5,676.1 695.1,680.3 698.7,676.5 702.3,678.0 705.9,674.0 709.5,678.5 713.1,673.1 716.7,678.6 720.3,677.6 723.9,677.8 727.5,677.3 731.1,679.5 734.7,679.5 738.3,678.7 741.9,679.3 745.5,679.4 749.1,676.7 752.7,680.6 756.3,678.2 759.9,682.2 763.5,677.4 767.1,680.0 770.7,677.3 774.2,677.8 777.8,675.0 781.4,677.5 785.0,673.6 788.6,683.2 792.2,682.6 795.8,680.0 799.4,675.8 803.0,681.5 806.6,681.7 810.2,681.2 813.8,679.6 817.4,679.6 821.0,680.0 824.6,684.4 828.2,680.1 831.8,683.2 835.4,681.6 839.0,687.9 842.6,681.2 846.2,683.6 849.8,681.7 853.4,683.2 857.0,681.6 860.6,681.2 864.2,682.1 867.8,683.3 871.4,682.1 875.0,684.0 878.6,681.7 882.2,684.8 885.8,682.1 889.4,687.3 893.0,682.7 896.6,684.6 900.2,682.9 903.7,685.9 907.3,677.7 910.9,683.4 914.5,681.5 918.1,688.4 921.7,682.3 925.3,684.7 928.9,681.4 932.5,683.2 936.1,678.6 939.7,683.8 943.3,681.6 946.9,682.5 950.5,681.8 954.1,681.9 957.7,681.0 961.3,684.2 964.9,679.7 968.5,681.9 972.1,680.8 975.7,684.7 979.3,677.6 982.9,683.6 986.5,682.6 990.1,682.8 993.7,686.8 997.3,682.0 1000.9,679.3 1004.5,681.8 1008.1,679.3 1011.7,681.5 1015.3,683.5 1018.9,683.5 1022.5,674.7 1026.1,684.6 1029.7,679.4 1033.2,682.4 1036.8,674.5 1040.4,680.3 1044.0,678.0 1047.6,679.8 1051.2,677.7 1054.8,679.2 1058.4,678.1 1062.0,680.5 1065.6,676.3 1069.2,679.4 1072.8,676.9 1076.4,671.7 1080.0,674.7 1083.6,676.8 1087.2,674.7 1090.8,674.3 1094.4,671.9 1098.0,676.0 1101.6,670.7 1105.2,669.9 1108.8,668.2 1112.4,668.3 1116.0,662.3 1119.6,670.3 1123.2,662.7 1126.8,663.8 1130.4,660.9 1134.0,659.1 1137.6,656.0 1141.2,658.7 1144.8,652.3 1148.4,657.8 1152.0,654.0 1155.6,655.4 1159.2,650.5 1162.7,651.2 1166.3,648.6 1169.9,650.8 1173.5,648.7 1177.1,647.4 1180.7,648.9 1184.3,650.0 1187.9,647.5 1191.5,651.0 1195.1,647.5 1198.7,647.2 1202.3,643.3 1205.9,644.0 1209.5,643.5 1213.1,643.5 1216.7,648.3 1220.3,643.5 1223.9,642.5 1227.5,643.8 1231.1,645.9 1234.7,646.7 1238.3,639.7 1241.9,642.8 1245.5,638.7 1249.1,646.1 1252.7,640.8 1256.3,639.6 1259.9,639.4 1263.5,641.2 1267.1,638.5 1270.7,640.6 1274.3,637.5 1277.9,640.2 1281.5,638.2 1285.1,641.8 1288.7,638.3 1292.2,640.0 1295.8,638.2 1299.4,644.6 1303.0,642.6 1306.6,642.5 1310.2,642.1 1313.8,642.9 1317.4,642.1 1321.0,644.1 1324.6,641.1 1328.2,645.5 1331.8,639.2 1335.4,644.7 1339.0,645.2 1342.6,643.1 1346.2,642.4 1349.8,642.1 1353.4,641.2"/><polyline fill="none" stroke="#f2c01f" stroke-width="2.0" stroke-linejoin="miter" stroke-miterlimit="3" points="321.0,680.8 324.6,677.0 328.2,681.7 331.8,679.3 335.4,679.7 339.0,677.8 342.6,678.1 346.2,678.0 349.8,679.0 353.4,673.9 357.0,682.4 360.6,677.7 364.2,680.8 367.8,675.9 371.4,677.9 375.0,675.3 378.6,678.4 382.2,677.3 385.7,677.4 389.3,675.4 392.9,677.7 396.5,674.8 400.1,677.4 403.7,676.6 407.3,681.1 410.9,679.0 414.5,680.1 418.1,678.8 421.7,680.9 425.3,679.5 428.9,680.8 432.5,680.3 436.1,683.3 439.7,681.5 443.3,683.1 446.9,679.7 450.5,681.5 454.1,682.9 457.7,691.1 461.3,681.7 464.9,685.0 468.5,685.3 472.1,686.2 475.7,684.9 479.3,684.2 482.9,678.2 486.5,686.5 490.1,685.4 493.7,689.4 497.3,685.2 500.9,690.7 504.5,693.4 508.1,688.5 511.7,687.0 515.2,688.9 518.8,686.3 522.4,690.8 526.0,689.4 529.6,692.2 533.2,690.7 536.8,693.9 540.4,691.2 544.0,692.4 547.6,690.7 551.2,695.8 554.8,693.3 558.4,694.9 562.0,692.5 565.6,694.0 569.2,693.5 572.8,694.2 576.4,692.3 580.0,695.5 583.6,694.6 587.2,695.1 590.8,694.2 594.4,696.2 598.0,694.5 601.6,695.6 605.2,691.8 608.8,699.8 612.4,695.6 616.0,697.2 619.6,692.6 623.2,697.9 626.8,694.9 630.4,698.4 634.0,697.5 637.6,698.4 641.2,705.8 644.7,699.6 648.3,698.0 651.9,702.8 655.5,698.3 659.1,701.0 662.7,702.4 666.3,701.2 669.9,696.9 673.5,697.6 677.1,703.2 680.7,704.2 684.3,700.3 687.9,702.2 691.5,701.9 695.1,696.4 698.7,700.4 702.3,703.6 705.9,701.5 709.5,706.7 713.1,702.6 716.7,701.0 720.3,702.3 723.9,703.7 727.5,702.7 731.1,704.8 734.7,702.1 738.3,706.2 741.9,699.8 745.5,706.9 749.1,704.2 752.7,706.4 756.3,705.4 759.9,707.2 763.5,709.4 767.1,706.8 770.7,706.7 774.2,708.2 777.8,706.4 781.4,709.1 785.0,706.8 788.6,711.0 792.2,708.1 795.8,708.1 799.4,705.4 803.0,712.5 806.6,708.5 810.2,710.2 813.8,709.8 817.4,710.7 821.0,707.8 824.6,710.3 828.2,704.8 831.8,708.4 835.4,710.2 839.0,711.8 842.6,708.0 846.2,708.9 849.8,712.1 853.4,716.4 857.0,712.0 860.6,711.3 864.2,710.9 867.8,712.8 871.4,708.4 875.0,711.4 878.6,719.7 882.2,712.0 885.8,710.3 889.4,712.5 893.0,714.3 896.6,712.7 900.2,713.6 903.7,712.5 907.3,711.0 910.9,715.7 914.5,711.0 918.1,712.9 921.7,712.3 925.3,711.5 928.9,712.3 932.5,713.7 936.1,711.4 939.7,714.2 943.3,711.1 946.9,712.5 950.5,710.1 954.1,713.4 957.7,711.4 961.3,713.9 964.9,708.1 968.5,712.9 972.1,706.2 975.7,711.6 979.3,710.7 982.9,710.9 986.5,714.3 990.1,710.7 993.7,709.4 997.3,712.6 1000.9,708.0 1004.5,710.8 1008.1,708.2 1011.7,708.5 1015.3,706.9 1018.9,709.1 1022.5,707.2 1026.1,708.3 1029.7,707.1 1033.2,707.7 1036.8,707.5 1040.4,707.9 1044.0,708.4 1047.6,706.3 1051.2,702.7 1054.8,704.8 1058.4,702.4 1062.0,701.8 1065.6,698.5 1069.2,698.0 1072.8,694.9 1076.4,697.4 1080.0,694.9 1083.6,693.6 1087.2,690.4 1090.8,689.6 1094.4,686.2 1098.0,685.6 1101.6,682.2 1105.2,683.3 1108.8,677.6 1112.4,678.5 1116.0,675.3 1119.6,678.7 1123.2,673.0 1126.8,674.7 1130.4,671.5 1134.0,672.7 1137.6,670.8 1141.2,669.3 1144.8,669.0 1148.4,671.6 1152.0,669.0 1155.6,665.4 1159.2,666.0 1162.7,668.4 1166.3,662.3 1169.9,667.0 1173.5,660.4 1177.1,659.1 1180.7,654.8 1184.3,657.2 1187.9,662.4 1191.5,659.0 1195.1,657.4 1198.7,661.4 1202.3,658.4 1205.9,660.5 1209.5,661.0 1213.1,660.3 1216.7,658.4 1220.3,659.5 1223.9,658.3 1227.5,660.1 1231.1,658.4 1234.7,659.6 1238.3,657.6 1241.9,660.2 1245.5,658.8 1249.1,659.4 1252.7,658.4 1256.3,658.2 1259.9,657.3 1263.5,655.6 1267.1,657.3 1270.7,661.1 1274.3,659.0 1277.9,660.8 1281.5,658.7 1285.1,661.5 1288.7,660.4 1292.2,661.9 1295.8,660.6 1299.4,664.5 1303.0,660.1 1306.6,662.2 1310.2,659.2 1313.8,660.5 1317.4,659.0 1321.0,660.4 1324.6,654.8 1328.2,656.8 1331.8,655.1 1335.4,659.0 1339.0,656.1 1342.6,658.3 1346.2,658.3 1349.8,659.1 1353.4,653.3"/><polyline fill="none" stroke="#7e9cfa" stroke-width="1.7" stroke-linejoin="miter" stroke-miterlimit="3" points="321.0,704.2 324.6,705.2 328.2,705.2 331.8,704.0 335.4,705.4 339.0,703.2 342.6,705.5 346.2,704.1 349.8,705.6 353.4,703.1 357.0,707.7 360.6,705.3 364.2,706.5 367.8,704.6 371.4,706.8 375.0,704.1 378.6,706.2 382.2,705.5 385.7,707.0 389.3,705.9 392.9,705.0 396.5,706.4 400.1,707.3 403.7,706.8 407.3,708.4 410.9,707.5 414.5,708.0 418.1,707.1 421.7,709.1 425.3,709.1 428.9,708.6 432.5,710.1 436.1,709.0 439.7,707.8 443.3,709.9 446.9,708.1 450.5,710.0 454.1,705.7 457.7,710.5 461.3,708.5 464.9,709.8 468.5,709.1 472.1,710.3 475.7,708.7 479.3,710.8 482.9,709.2 486.5,709.8 490.1,710.0 493.7,707.8 497.3,709.1 500.9,710.0 504.5,708.3 508.1,708.8 511.7,708.3 515.2,709.2 518.8,708.4 522.4,711.0 526.0,706.5 529.6,709.5 533.2,706.9 536.8,708.6 540.4,707.6 544.0,707.5 547.6,706.3 551.2,710.5 554.8,706.0 558.4,706.4 562.0,707.2 565.6,705.7 569.2,703.9 572.8,705.2 576.4,702.9 580.0,704.6 583.6,702.1 587.2,703.5 590.8,701.4 594.4,701.9 598.0,702.6 601.6,702.2 605.2,698.4 608.8,700.3 612.4,696.8 616.0,698.2 619.6,696.4 623.2,696.2 626.8,698.0 630.4,693.6 634.0,692.9 637.6,694.2 641.2,694.0 644.7,692.7 648.3,691.1 651.9,690.1 655.5,688.5 659.1,688.2 662.7,687.4 666.3,687.5 669.9,684.5 673.5,684.2 677.1,682.3 680.7,682.9 684.3,680.9 687.9,683.7 691.5,677.1 695.1,679.0 698.7,677.3 702.3,677.7 705.9,675.0 709.5,676.3 713.1,675.3 716.7,676.1 720.3,674.7 723.9,675.7 727.5,673.0 731.1,674.4 734.7,673.8 738.3,674.5 741.9,673.0 745.5,674.5 749.1,671.5 752.7,673.6 756.3,671.5 759.9,673.1 763.5,671.3 767.1,673.6 770.7,669.6 774.2,672.0 777.8,670.4 781.4,672.4 785.0,672.3 788.6,672.7 792.2,670.8 795.8,672.5 799.4,669.9 803.0,670.9 806.6,669.6 810.2,666.9 813.8,666.7 817.4,668.0 821.0,666.8 824.6,667.1 828.2,663.4 831.8,666.6 835.4,665.1 839.0,666.4 842.6,662.7 846.2,663.1 849.8,660.9 853.4,662.5 857.0,660.2 860.6,661.8 864.2,657.4 867.8,661.3 871.4,659.0 875.0,661.0 878.6,658.9 882.2,660.0 885.8,659.3 889.4,660.3 893.0,660.2 896.6,662.1 900.2,660.2 903.7,661.2 907.3,660.4 910.9,662.0 914.5,660.8 918.1,662.8 921.7,658.9 925.3,661.6 928.9,660.2 932.5,661.8 936.1,660.1 939.7,662.1 943.3,660.7 946.9,662.6 950.5,660.6 954.1,661.9 957.7,661.3 961.3,662.2 964.9,658.4 968.5,661.4 972.1,654.3 975.7,659.0 979.3,654.3 982.9,656.7 986.5,655.0 990.1,655.4 993.7,657.6 997.3,664.3 1000.9,665.0 1004.5,668.6 1008.1,667.8 1011.7,671.6 1015.3,669.1 1018.9,671.6 1022.5,670.9 1026.1,671.9 1029.7,671.1 1033.2,674.6 1036.8,673.0 1040.4,674.6 1044.0,674.1 1047.6,675.9 1051.2,674.4 1054.8,676.6 1058.4,676.6 1062.0,676.5 1065.6,675.9 1069.2,679.0 1072.8,676.1 1076.4,678.5 1080.0,677.9 1083.6,680.7 1087.2,678.5 1090.8,680.4 1094.4,679.5 1098.0,681.3 1101.6,681.2 1105.2,682.7 1108.8,682.8 1112.4,683.8 1116.0,682.9 1119.6,683.1 1123.2,682.3 1126.8,685.6 1130.4,685.0 1134.0,688.7 1137.6,684.7 1141.2,687.4 1144.8,685.8 1148.4,688.2 1152.0,686.9 1155.6,686.4 1159.2,685.3 1162.7,688.0 1166.3,688.1 1169.9,689.3 1173.5,688.5 1177.1,691.2 1180.7,689.5 1184.3,691.1 1187.9,690.8 1191.5,692.9 1195.1,691.5 1198.7,692.7 1202.3,691.5 1205.9,692.3 1209.5,693.0 1213.1,695.3 1216.7,694.2 1220.3,694.8 1223.9,694.9 1227.5,695.5 1231.1,692.5 1234.7,697.0 1238.3,695.4 1241.9,698.6 1245.5,695.0 1249.1,696.2 1252.7,696.0 1256.3,695.9 1259.9,694.4 1263.5,696.1 1267.1,694.1 1270.7,697.3 1274.3,694.9 1277.9,696.9 1281.5,696.0 1285.1,697.7 1288.7,697.4 1292.2,699.7 1295.8,699.8 1299.4,699.8 1303.0,700.2 1306.6,703.8 1310.2,700.7 1313.8,701.8 1317.4,699.8 1321.0,702.4 1324.6,700.3 1328.2,702.2 1331.8,701.9 1335.4,703.4 1339.0,702.2 1342.6,702.9 1346.2,704.0 1349.8,705.1 1353.4,704.1"/></svg>
<svg class="abs" style="left:0;top:0" width="1399" height="779" viewBox="0 0 1399 779"><polygon points="25.7,10.4 36.8,16.8 25.7,23.2 14.6,16.8" fill="#3c9bc8"/><polygon points="12.9,19.3 25,25.7 25,38.9 12.9,32.5" fill="#5cb4dc"/><polygon points="27,25.7 38.9,19.1 38.9,31.4 27,38.9" fill="#a8d8ee"/><circle cx="50.6" cy="27.5" r="0.6" fill="#e8eef5"/><g stroke="#fff" fill="none" stroke-linecap="butt"><path d="M1364.2 23.6 L1369.4 18.7" stroke-width="1.3"/><path d="M1366.2 16.4 L1372.3 21.9" stroke-width="2.3"/><path d="M1369.4 18.9 L1374.6 13.8" stroke-width="4.2"/><path d="M1372.6 11.6 L1377 15.6" stroke-width="2"/></g><path d="M1393.4 12.3 L1403.6 22.7 M1403.6 12.3 L1393.4 22.7" stroke="#fff" stroke-width="1.6" fill="none"/><circle cx="40.9" cy="63.2" r="3.6" fill="none" stroke="#5c5c5c" stroke-width="1.1"/><path d="M38.3 65.8 L32.4 71.4" stroke="#5c5c5c" stroke-width="1.1"/><path d="M240.2 61.9 L237 65.2 L240.2 68.5 M243.8 61.9 L240.6 65.2 L243.8 68.5" fill="none" stroke="#333" stroke-width="1.1"/><polygon points="48.88,114.85 44.85,118.88 39.15,118.88 35.12,114.85 35.12,109.15 39.15,105.12 44.85,105.12 48.88,109.15" fill="#a57ac0"/><polygon points="47.87,114.43 44.43,117.87 39.57,117.87 36.13,114.43 36.13,109.57 39.57,106.13 44.43,106.13 47.87,109.57" fill="none" stroke="#c9add8" stroke-width="0.6"/><polygon points="47.45,114.26 44.26,117.45 39.74,117.45 36.55,114.26 36.55,109.74 39.74,106.55 44.26,106.55 47.45,109.74" fill="#8648a2"/><g transform="translate(42.00,112.00)" stroke="none" fill="#eadff1"><polygon points="0.9,-3.7 0.9,0.5 -3.2,0.4"/><path d="M-4.6 -3.6 L-1 -0.6" stroke="#eadff1" stroke-width="1.9" fill="none"/><polygon points="1.9,-0.7 4.5,-0.3 2.2,2"/><path d="M3.2 0.7 L5.9 3" stroke="#e3d4ec" stroke-width="1.3" fill="none"/><path d="M-2.2 2.3 L1.4 5.4" stroke="#dccae8" stroke-width="1.1" fill="none"/></g><polygon points="48.88,360.05 44.85,364.08 39.15,364.08 35.12,360.05 35.12,354.35 39.15,350.32 44.85,350.32 48.88,354.35" fill="#a57ac0"/><polygon points="47.87,359.63 44.43,363.07 39.57,363.07 36.13,359.63 36.13,354.77 39.57,351.33 44.43,351.33 47.87,354.77" fill="none" stroke="#c9add8" stroke-width="0.6"/><polygon points="47.45,359.46 44.26,362.65 39.74,362.65 36.55,359.46 36.55,354.94 39.74,351.75 44.26,351.75 47.45,354.94" fill="#8648a2"/><g transform="translate(42.00,357.20)" stroke="none" fill="#eadff1"><polygon points="0.9,-3.7 0.9,0.5 -3.2,0.4"/><path d="M-4.6 -3.6 L-1 -0.6" stroke="#eadff1" stroke-width="1.9" fill="none"/><polygon points="1.9,-0.7 4.5,-0.3 2.2,2"/><path d="M3.2 0.7 L5.9 3" stroke="#e3d4ec" stroke-width="1.3" fill="none"/><path d="M-2.2 2.3 L1.4 5.4" stroke="#dccae8" stroke-width="1.1" fill="none"/></g><polygon points="48.88,393.85 44.85,397.88 39.15,397.88 35.12,393.85 35.12,388.15 39.15,384.12 44.85,384.12 48.88,388.15" fill="#a57ac0"/><polygon points="47.87,393.43 44.43,396.87 39.57,396.87 36.13,393.43 36.13,388.57 39.57,385.13 44.43,385.13 47.87,388.57" fill="none" stroke="#c9add8" stroke-width="0.6"/><polygon points="47.45,393.26 44.26,396.45 39.74,396.45 36.55,393.26 36.55,388.74 39.74,385.55 44.26,385.55 47.45,388.74" fill="#8648a2"/><g transform="translate(42.00,391.00)" stroke="none" fill="#eadff1"><polygon points="0.9,-3.7 0.9,0.5 -3.2,0.4"/><path d="M-4.6 -3.6 L-1 -0.6" stroke="#eadff1" stroke-width="1.9" fill="none"/><polygon points="1.9,-0.7 4.5,-0.3 2.2,2"/><path d="M3.2 0.7 L5.9 3" stroke="#e3d4ec" stroke-width="1.3" fill="none"/><path d="M-2.2 2.3 L1.4 5.4" stroke="#dccae8" stroke-width="1.1" fill="none"/></g><polygon points="48.88,427.85 44.85,431.88 39.15,431.88 35.12,427.85 35.12,422.15 39.15,418.12 44.85,418.12 48.88,422.15" fill="#a57ac0"/><polygon points="47.87,427.43 44.43,430.87 39.57,430.87 36.13,427.43 36.13,422.57 39.57,419.13 44.43,419.13 47.87,422.57" fill="none" stroke="#c9add8" stroke-width="0.6"/><polygon points="47.45,427.26 44.26,430.45 39.74,430.45 36.55,427.26 36.55,422.74 39.74,419.55 44.26,419.55 47.45,422.74" fill="#8648a2"/><g transform="translate(42.00,425.00)" stroke="none" fill="#eadff1"><polygon points="0.9,-3.7 0.9,0.5 -3.2,0.4"/><path d="M-4.6 -3.6 L-1 -0.6" stroke="#eadff1" stroke-width="1.9" fill="none"/><polygon points="1.9,-0.7 4.5,-0.3 2.2,2"/><path d="M3.2 0.7 L5.9 3" stroke="#e3d4ec" stroke-width="1.3" fill="none"/><path d="M-2.2 2.3 L1.4 5.4" stroke="#dccae8" stroke-width="1.1" fill="none"/></g><rect x="35.3" y="139.1" width="12.9" height="14" rx="0.8" fill="#0f6cc6"/><rect x="46.8" y="139.1" width="1.4" height="14" fill="#6aaae2"/><rect x="38.2" y="142.4" width="6" height="2.4" rx="0.5" fill="#fff"/><circle cx="44.7" cy="175.4" r="2.75" fill="#43aadf"/><path d="M40.4 178.8 L42.4 178.8 L44.8 182.3 L47.2 178.8 L49.2 178.8 L49.2 186.5 L40.4 186.5 Z" fill="#2f97cf"/><circle cx="37.2" cy="180.6" r="1.7" fill="#43aadf"/><path d="M34.7 183 L35.8 183 L37.2 184.8 L38.6 183 L39.8 183 L39.8 186.5 L34.7 186.5 Z" fill="#2f97cf"/><path d="M35 214.4 L42.7 206.7 L48.8 206.7 L48.8 211.8 L40.4 219.9 Z" fill="#8347a3"/><circle cx="46.7" cy="208.8" r="0.85" fill="#fff"/><g stroke="#1a1a1a" fill="none"><path d="M44 248.6 L47.2 251.9" stroke-width="2.9" stroke-linecap="round"/><path d="M40.2 244.9 L42.2 246.9" stroke-width="2.4"/><path d="M38.4 241.2 A2.1 2.1 0 1 1 36.6 244.1" stroke-width="2"/><path d="M36.9 252.6 L41.6 247" stroke-width="3.1" stroke-linecap="round"/><path d="M41.6 247 L48 240.9" stroke-width="1.2"/></g><path d="M38.9 321.3 L38.9 319.3 Q38.9 318.4 39.8 318.4 L43.9 318.4 Q44.8 318.4 44.8 319.3 L44.8 321.3" fill="none" stroke="#2b2b2b" stroke-width="1.1"/><rect x="35" y="321.3" width="13.5" height="8.3" rx="0.7" fill="#c9192b"/><rect x="35" y="324.8" width="13.5" height="0.7" fill="#9d1020"/><rect x="36" y="322.2" width="2.8" height="0.9" fill="#f08a1d"/><rect x="36" y="326.3" width="3.6" height="1.7" fill="#f0a03a"/><rect x="46.3" y="326" width="2" height="2.2" fill="#7f6fd0"/><rect x="40.8" y="324.3" width="2" height="1.6" fill="#8a0d1b"/><rect x="35.9" y="452" width="2.6" height="13.3" fill="#a9d8f0"/><rect x="36.8" y="452" width="0.9" height="13.3" fill="#58addb"/><rect x="35.8" y="456.6" width="2.8" height="1.3" fill="#76858f"/><rect x="40.5" y="452" width="2.6" height="13.3" fill="#a9d8f0"/><rect x="41.3" y="452" width="0.9" height="13.3" fill="#58addb"/><rect x="40.4" y="461.1" width="2.8" height="1.3" fill="#76858f"/><rect x="45.3" y="452" width="2.6" height="13.3" fill="#a9d8f0"/><rect x="46.1" y="452" width="0.9" height="13.3" fill="#58addb"/><rect x="45.2" y="456.6" width="2.8" height="1.3" fill="#76858f"/><rect x="35.7" y="492" width="12.2" height="6.8" rx="0.9" fill="#1e1e1e"/><path d="M38.3 492.4 L38.3 490 A3.5 3.5 0 0 1 45.3 490 L45.3 492.4" fill="none" stroke="#1e1e1e" stroke-width="2.2"/><rect x="35.4" y="519.5" width="13.4" height="10.2" fill="#4db3dd"/><rect x="40.7" y="529.7" width="3" height="1.9" fill="#8c8c8c"/><rect x="37.3" y="531.4" width="9.8" height="1.3" fill="#8c8c8c"/><path d="M42.1 520.9 L42.1 525 M39.9 523.2 L42.1 525.6 L44.3 523.2" fill="none" stroke="#fff" stroke-width="1.2"/><rect x="39.8" y="526.7" width="4.6" height="1.1" fill="#fff"/><rect x="34.9" y="602.9" width="2.5" height="6.9" fill="#0f6cc6"/><rect x="38.8" y="601.2" width="2.4" height="8.6" fill="#3a9bd5"/><rect x="42.6" y="604" width="2.5" height="5.8" fill="#2b8fd0"/><rect x="46.5" y="601.9" width="2.4" height="7.9" fill="#0f6cc6"/><path d="M35.1 600.8 L40.7 596.8 L43.8 601.4 L48.8 597.3" fill="none" stroke="#7d3f98" stroke-width="1.1"/><path d="M35.9 629.8 L48.1 629.8 Q48.9 629.8 48.9 630.6 L48.9 639.2 Q48.9 640 48.1 640 L44.2 640 L43.4 643 L40.3 640 L35.9 640 Q35.1 640 35.1 639.2 L35.1 630.6 Q35.1 629.8 35.9 629.8 Z" fill="#b5d12d"/><rect x="41.1" y="631.2" width="1.8" height="5" fill="#fff"/><rect x="41.1" y="636.9" width="1.8" height="1.4" fill="#fff"/><path d="M42 719.2 L36 713.6 C33.6 710.8 35.6 707.4 38.6 707.6 C40.2 707.7 41.3 708.6 42 709.8 C42.7 708.6 43.8 707.7 45.4 707.6 C48.4 707.4 50.4 710.8 48 713.6 Z" fill="#3fa4d3"/><path d="M34.6 713.4 L38.8 713.4 L40.4 710.2 L41.6 716.6 L42.9 713 L49.4 713" fill="none" stroke="#fff" stroke-width="1"/><circle cx="41.9" cy="744.2" r="2.4" fill="#3fa4d3"/><path d="M38.2 745.4 A4 4 0 1 1 45.6 745.6 L45.6 746.6" fill="none" stroke="#3fa4d3" stroke-width="0.9"/><path d="M37.3 748 L39.7 748 A2.3 2.3 0 0 0 44.3 748 L46.9 748 L46.9 753.9 L37.3 753.9 Z" fill="#3fa4d3"/><path d="M288.7 47.6 L288.7 61.9 M281.4 54.75 L296 54.75" stroke="#111" stroke-width="3.1" fill="none"/><path d="M378.46 51.72 A5.3 5.3 0 1 1 370.79 52.19" fill="none" stroke="#111" stroke-width="2"/><polygon points="369.1,48.3 374.9,48.3 374.8,53.8" fill="#111"/><path d="M445.5 46.9 L445.5 56.5 M440.2 51.6 L445.5 57 L450.8 51.6" fill="none" stroke="#111" stroke-width="2"/><rect x="439.7" y="59.7" width="11.7" height="2.2" fill="#111"/><path d="M286.9 157.9 L292.6 151.1 L297.4 156.9 L303.6 150.3" fill="none" stroke="#a0479c" stroke-width="1.4"/><circle cx="286.9" cy="157.9" r="1.5" fill="#a0479c"/><circle cx="292.6" cy="151.1" r="1.5" fill="#a0479c"/><circle cx="297.4" cy="156.9" r="1.5" fill="#a0479c"/><circle cx="303.6" cy="150.3" r="1.5" fill="#a0479c"/><circle cx="443.6" cy="154.2" r="3.9" fill="none" stroke="#222" stroke-width="1"/><path d="M440.8 157.0 L435.7 161.7" stroke="#222" stroke-width="1"/><polygon points="446.8,158.4 452.8,158.4 449.8,161.7" fill="#111"/><circle cx="600.7" cy="154.0" r="3.9" fill="none" stroke="#222" stroke-width="1"/><path d="M597.9 156.8 L592.8 161.5" stroke="#222" stroke-width="1"/><polygon points="603.9,158.2 609.9,158.2 606.9,161.5" fill="#111"/><polygon points="677.9,153.1 686.9,153.1 682.4,157.9" fill="#111"/><path d="M711.9 149.3 L721.9 159.3 M721.9 149.3 L711.9 159.3" stroke="#9b4a9b" stroke-width="1.5" fill="none"/><path d="M745.6 144 L745.6 152.2 M741.2 148.2 L750 148.2" stroke="#dcb9dc" stroke-width="2.8" fill="none"/><path d="M743.6 161.2 L749.2 155.4 L753.9 160.3 L759.6 154.6" fill="none" stroke="#dcb9dc" stroke-width="1.3"/><circle cx="743.6" cy="161.2" r="1.6" fill="#dcb9dc"/><circle cx="749.2" cy="155.4" r="1.6" fill="#dcb9dc"/><circle cx="753.9" cy="160.3" r="1.6" fill="#dcb9dc"/><circle cx="759.6" cy="154.6" r="1.6" fill="#dcb9dc"/><path d="M783.9 144 L783.9 152.6 M779.6 148.3 L788.3 148.3" stroke="#1e6fbf" stroke-width="2.8" fill="none"/><path d="M787.4 152.1 L800.3 152.1 L795.3 157.8 L795.3 163 L792.4 164.4 L792.4 157.8 Z" fill="#1e6fbf"/><path d="M843.2 148.7 L837 148.7 L830.4 154.4 L837 160 L843.2 160 M830.4 154.4 L843.2 154.4" fill="none" stroke="#0b6e35" stroke-width="1.4" stroke-linejoin="round"/><circle cx="843.4" cy="148.7" r="1.55" fill="#0b6e35"/><circle cx="843.4" cy="154.5" r="1.55" fill="#0b6e35"/><circle cx="843.4" cy="160.0" r="1.55" fill="#0b6e35"/><path d="M940.4 148.5 L950.6 158.7 M950.6 148.5 L940.4 158.7" stroke="#0b6e35" stroke-width="1.7" fill="none"/><path d="M1243.8 207.6 L1243.8 197 M1239.6 201.2 L1243.8 196.9 L1248 201.2" fill="none" stroke="#bdbdbd" stroke-width="1"/><path d="M1265.3 196.8 L1265.3 207.4 M1261.1 203.2 L1265.3 207.5 L1269.5 203.2" fill="none" stroke="#bdbdbd" stroke-width="1"/><g fill="none" stroke="#222" stroke-width="1.1" stroke-linejoin="round"><path d="M1281 209.6 L1286.8 203.8"/><path d="M1283.4 200.4 L1290.2 207.2 L1291.4 204 L1295.4 200 L1291 195.6 L1286.9 199.6 Z" fill="#fff"/></g><g fill="none" stroke="#222" stroke-width="1.1"><path d="M1304.8 197.8 L1316.4 197.8 M1308.4 197.6 L1308.4 195.8 L1312.8 195.8 L1312.8 197.6"/><path d="M1306 198 L1306 208.2 Q1306 209.4 1307.2 209.4 L1314 209.4 Q1315.2 209.4 1315.2 208.2 L1315.2 198"/><path d="M1308.6 200.2 L1308.6 207.2 M1310.6 200.2 L1310.6 207.2 M1312.6 200.2 L1312.6 207.2"/></g><g fill="#fff" stroke="#222" stroke-width="1.1" stroke-linejoin="round"><path d="M1327.2 195.8 L1333.4 195.8 L1333.4 206 L1327.2 206 Z"/><path d="M1330.4 198.4 L1336.6 198.4 L1339.8 201.8 L1339.8 209.4 L1330.4 209.4 Z"/><path d="M1336.4 198.6 L1336.4 202 L1339.6 202" fill="none"/></g><polygon points="1354.1,195.5 1356.9,195.5 1356.8,197.4 1358.1,197.9 1359.3,196.5 1361.3,198.5 1359.9,199.7 1360.4,201.0 1362.3,200.9 1362.3,203.7 1360.4,203.6 1359.9,204.9 1361.3,206.1 1359.3,208.1 1358.1,206.7 1356.8,207.2 1356.9,209.1 1354.1,209.1 1354.2,207.2 1352.9,206.7 1351.7,208.1 1349.7,206.1 1351.1,204.9 1350.6,203.6 1348.7,203.7 1348.7,200.9 1350.6,201.0 1351.1,199.7 1349.7,198.5 1351.7,196.5 1352.9,197.9 1354.2,197.4" fill="none" stroke="#222" stroke-width="1" stroke-linejoin="round"/><circle cx="1355.5" cy="202.3" r="2.4" fill="none" stroke="#222" stroke-width="1"/><circle cx="1373.2" cy="200.3" r="1" fill="#222"/><circle cx="1378.0" cy="200.3" r="1" fill="#222"/><circle cx="1382.8" cy="200.3" r="1" fill="#222"/></svg>
<span class="t" id="t0" style="left:179.0px;top:18.5px;font-size:16px;transform:translateY(-50%) scaleX(0.9674);color:#fff;">- Metrics (Preview)</span>
<span class="t" id="t1" style="left:49.0px;top:34.5px;font-size:9.5px;transform:translateY(-50%) scaleX(0.9520);color:#c9d4df;font-weight:bold;">Traffic Manager profile</span>
<span class="t" id="t2" style="left:56.5px;top:65.5px;font-size:11.5px;transform:translateY(-50%) scaleX(0.9521);color:#8a8a8a;font-style:italic;">Search (Ctrl+/)</span>
<span class="t" id="t3" style="left:58.1px;top:113.2px;font-size:12px;transform:translateY(-50%) scaleX(0.9117);color:#1e1e1e;">Overview</span>
<span class="t" id="t4" style="left:58.1px;top:146.2px;font-size:12px;transform:translateY(-50%) scaleX(0.9641);color:#1e1e1e;">Activity log</span>
<span class="t" id="t5" style="left:58.1px;top:180.2px;font-size:12px;transform:translateY(-50%) scaleX(0.9187);color:#1e1e1e;">Access control (IAM)</span>
<span class="t" id="t6" style="left:58.1px;top:214.0px;font-size:12px;transform:translateY(-50%) scaleX(0.9109);color:#1e1e1e;">Tags</span>
<span class="t" id="t7" style="left:58.1px;top:248.0px;font-size:12px;transform:translateY(-50%) scaleX(0.9286);color:#1e1e1e;">Diagnose and solve problems</span>
<span class="t" id="t8" style="left:58.1px;top:324.0px;font-size:12px;transform:translateY(-50%) scaleX(0.9553);color:#1e1e1e;">Configuration</span>
<span class="t" id="t9" style="left:58.1px;top:357.8px;font-size:12px;transform:translateY(-50%) scaleX(0.9041);color:#1e1e1e;">Real user measurements</span>
<span class="t" id="t10" style="left:58.1px;top:391.6px;font-size:12px;transform:translateY(-50%) scaleX(0.9298);color:#1e1e1e;">Traffic view</span>
<span class="t" id="t11" style="left:58.1px;top:425.6px;font-size:12px;transform:translateY(-50%) scaleX(0.9274);color:#1e1e1e;">Endpoints</span>
<span class="t" id="t12" style="left:58.1px;top:459.2px;font-size:12px;transform:translateY(-50%) scaleX(0.9213);color:#1e1e1e;">Properties</span>
<span class="t" id="t13" style="left:58.1px;top:493.0px;font-size:12px;transform:translateY(-50%) scaleX(0.8706);color:#1e1e1e;">Locks</span>
<span class="t" id="t14" style="left:58.1px;top:527.0px;font-size:12px;transform:translateY(-50%) scaleX(0.9588);color:#1e1e1e;">Automation script</span>
<span class="t" id="t15" style="left:58.1px;top:604.0px;font-size:12px;transform:translateY(-50%) scaleX(0.9129);color:#1e1e1e;">Metrics (Preview)</span>
<span class="t" id="t16" style="left:57.9px;top:636.8px;font-size:12px;transform:translateY(-50%) scaleX(0.9189);color:#1e1e1e;">Alerts</span>
<span class="t" id="t17" style="left:57.9px;top:713.8px;font-size:12px;transform:translateY(-50%) scaleX(0.9051);color:#1e1e1e;">Resource health</span>
<span class="t" id="t18" style="left:57.9px;top:747.8px;font-size:12px;transform:translateY(-50%) scaleX(0.9446);color:#1e1e1e;">New support request</span>
<span class="t" id="t19" style="left:30.2px;top:293.2px;font-size:10px;transform:translateY(-50%) scaleX(0.8357);color:#2b2b2b;-webkit-text-stroke:0.2px #2b2b2b;">SETTINGS</span>
<span class="t" id="t20" style="left:30.2px;top:572.4px;font-size:10px;transform:translateY(-50%) scaleX(0.9255);color:#2b2b2b;-webkit-text-stroke:0.2px #2b2b2b;">MONITORING</span>
<span class="t" id="t21" style="left:30.0px;top:682.2px;font-size:10px;transform:translateY(-50%) scaleX(0.8750);color:#2b2b2b;-webkit-text-stroke:0.2px #2b2b2b;">SUPPORT + TROUBLESHOOTING</span>
<span class="t" id="t22" style="left:301.1px;top:55.0px;font-size:11px;transform:translateY(-50%) scaleX(1.0095);color:#1e1e1e;">Add Chart</span>
<span class="t" id="t23" style="left:386.2px;top:55.0px;font-size:11px;transform:translateY(-50%) scaleX(0.9447);color:#1e1e1e;">Refresh</span>
<span class="t" id="t24" style="left:458.4px;top:55.0px;font-size:11px;transform:translateY(-50%) scaleX(0.9745);color:#1e1e1e;">Export to Excel</span>
<span class="t" id="t25" style="left:284.3px;top:90.0px;font-size:11.5px;transform:translateY(-50%) scaleX(0.9607);color:#1e1e1e;">Last 24 hours (Automatic)</span>
<span class="t" id="t26" style="left:311.8px;top:138.3px;font-size:7.6px;transform:translateY(-50%) scaleX(0.8409);color:#222;">RESOURCE</span>
<span class="t" id="t27" style="left:468.4px;top:138.3px;font-size:7.6px;transform:translateY(-50%) scaleX(0.8794);color:#222;">METRIC</span>
<span class="t" id="t28" style="left:624.5px;top:138.3px;font-size:7.6px;transform:translateY(-50%) scaleX(0.9110);color:#222;">AGGREGATION</span>
<span class="t" id="t29" style="left:473.7px;top:155.6px;font-size:11.5px;transform:translateY(-50%) scaleX(0.9491);color:#1e1e1e;">Queries by Endpoint...</span>
<span class="t" id="t30" style="left:630.2px;top:155.8px;font-size:11.5px;transform:translateY(-50%) scaleX(0.8793);color:#1e1e1e;">Sum</span>
<span class="t" id="t31" style="left:855.5px;top:154.0px;font-size:11px;transform:translateY(-50%) scaleX(1.0181);color:#0b7a3e;">Endpoint Name</span>
<span class="t" id="t32" style="left:277.9px;top:199.9px;font-size:13px;transform:translateY(-50%) scaleX(0.9981);color:#1e1e1e;">Sum Queries by Endpoint Returned by Endpoint Name</span>
<span class="t" id="t33" style="left:299.8px;top:750.0px;font-size:9.6px;transform:translateY(-50%) scaleX(0.9918);color:#333;">0</span>
<span class="t" id="t34" style="left:346.5px;top:767.0px;font-size:9.5px;transform:translateY(-50%) scaleX(0.8956);color:#d2d2d2;">12 PM</span>
<span class="t" id="t35" style="left:604.9px;top:766.8px;font-size:10px;transform:translateY(-50%) scaleX(0.8822);color:#3c3c3c;">06 PM</span>
<span class="t" id="t36" style="left:867.0px;top:766.8px;font-size:10px;transform:translateY(-50%) scaleX(0.9222);color:#3c3c3c;">June</span>
<span class="t" id="t37" style="left:1122.7px;top:766.8px;font-size:10px;transform:translateY(-50%) scaleX(0.9274);color:#3c3c3c;">06 AM</span>
<div id="frame"></div>
</body>
</html>
